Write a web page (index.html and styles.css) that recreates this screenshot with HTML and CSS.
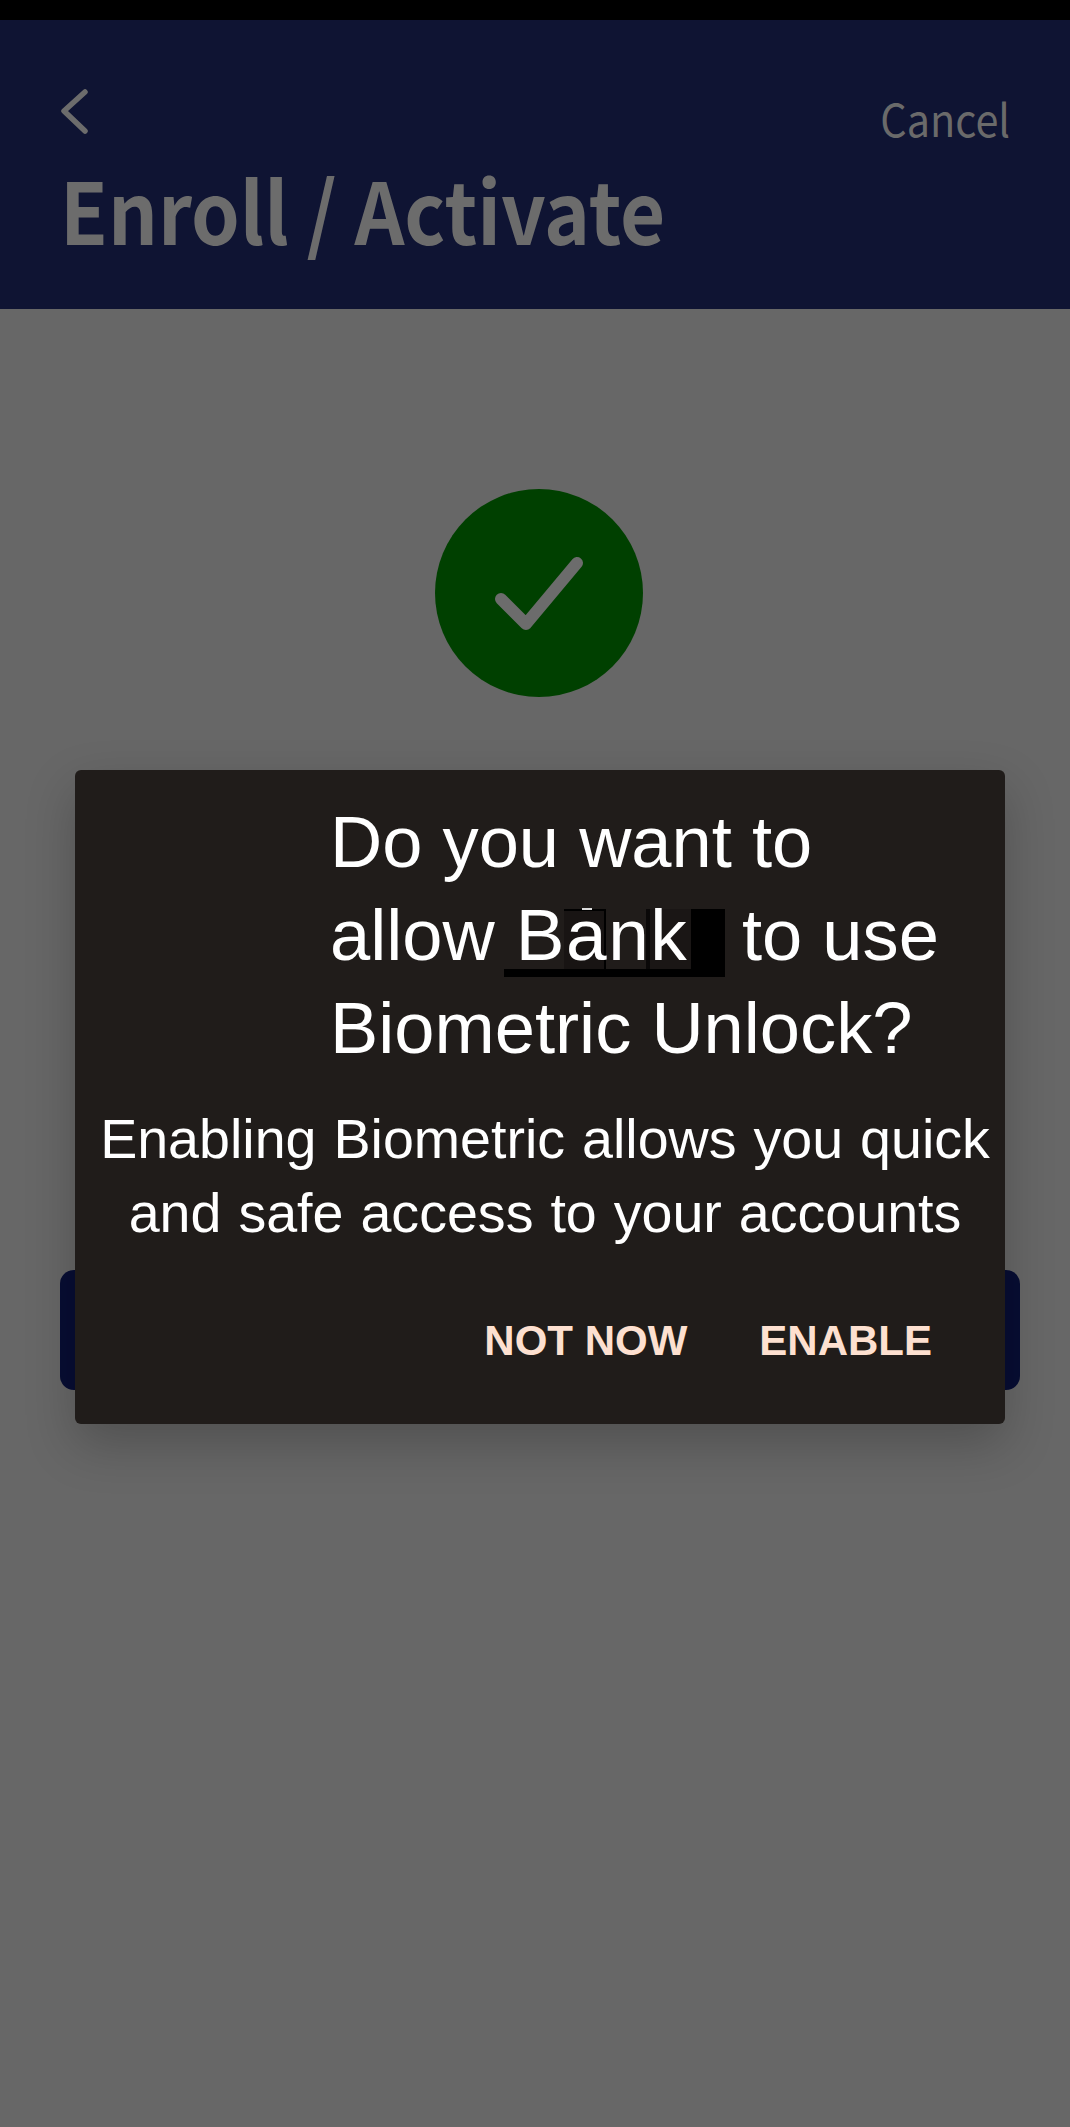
FILE: index.html
```html
<!DOCTYPE html>
<html lang="en">
<head>
<meta charset="utf-8">
<title>Enroll / Activate</title>
<link rel="stylesheet" href="styles.css">
</head>
<body>
<div class="page">
  <div class="status-bar"></div>
  <header class="app-header">
    <div class="top-row">
      <svg class="back-icon" viewBox="0 0 30 46" width="30" height="46" aria-hidden="true"><path d="M25 4 L4 23 L25 43"/></svg>
      <span class="cancel">Cancel</span>
    </div>
    <h1 class="page-title">Enroll / Activate</h1>
  </header>
  <main class="content">
    <div class="success-badge">
      <svg class="check-icon" viewBox="0 0 208 208" width="208" height="208" aria-hidden="true"><path d="M66 110 L91 135 L142 74"/></svg>
    </div>
    <div class="primary-button"></div>
  </main>
  <section class="dialog">
    <h2 class="dialog-title">Do you want to<br>allow <span class="app-name"><span class="mask-strip"></span><span class="mask-block"></span><span class="mask-a"></span><span class="mask-k"></span><span class="mask-dash"></span><span class="app-name-text">Bank</span></span> to use<br>Biometric Unlock?</h2>
    <p class="dialog-body">Enabling Biometric allows you quick<br>and safe access to your accounts</p>
    <div class="dialog-actions">
      <span class="dialog-action">NOT NOW</span>
      <span class="dialog-action">ENABLE</span>
    </div>
  </section>
</div>
</body>
</html>
```
FILE: styles.css
```css
* { box-sizing: border-box; }
html, body { margin: 0; padding: 0; }
body { background: #676767; font-family: "Liberation Sans", Arial, sans-serif; }
.page { position: relative; width: 1070px; height: 2127px; overflow: hidden; background: #676767; }
.status-bar { height: 20px; background: #000; }
.app-header { height: 289px; background: #0f1433; padding: 66px 60px 0 60px; color: #6c6c6c; font-family: "Noto Sans CJK SC", "Noto Sans", sans-serif; }
.top-row { display: flex; justify-content: space-between; align-items: flex-start; height: 67px; }
.back-icon { display: block; margin-top: 2px; }
.back-icon path { fill: none; stroke: #6c6c6c; stroke-width: 5.5; stroke-linecap: round; stroke-linejoin: round; }
.cancel { font-size: 45px; line-height: 64px; margin-top: 0; color: #6a6a6a; transform: scaleX(0.92); transform-origin: right center; }
.page-title { margin: 0; font-size: 85px; line-height: 110px; font-weight: 700; color: #6c6c6c; transform: scaleX(0.917); transform-origin: left center; }
.content { display: flex; flex-direction: column; align-items: center; padding: 180px 0 0 10px; }
.success-badge { width: 208px; height: 208px; margin-right: 2px; border-radius: 50%; background: #004000; }
.check-icon { display: block; }
.check-icon path { fill: none; stroke: #6c6c6c; stroke-width: 12; stroke-linecap: round; stroke-linejoin: round; }
.primary-button { width: 960px; height: 120px; margin-top: 573px; border-radius: 14px; background: #070d33; }
.dialog { position: absolute; left: 75px; top: 770px; width: 930px; height: 654px; padding-top: 26px; background: #201c1a; border-radius: 6px; box-shadow: 0 20px 50px rgba(0, 0, 0, 0.22); color: #fff; }
.dialog-title { margin: 0; padding-left: 255px; font-size: 72.3px; line-height: 93px; font-weight: 400; }
.app-name { position: relative; display: inline-block; width: 207px; height: 68px; vertical-align: -17px; }
.app-name-text { position: absolute; left: 1px; bottom: 2px; line-height: 80px; font-size: 73px; letter-spacing: 1.5px; }
.mask-strip { position: absolute; left: -11px; right: -3px; top: 60px; height: 8px; background: #000; }
.mask-block { position: absolute; left: 176px; right: -3px; top: 0; height: 68px; background: #000; }
.mask-a { position: absolute; left: 49px; top: 0; width: 42px; height: 60px; background: #181413; border-top: 2px solid #000; border-right: 2px solid #000; }
.mask-k { position: absolute; left: 131px; top: 0; width: 45px; height: 60px; background: #1a1615; border-left: 4px solid #0a0808; }
.mask-dash { position: absolute; left: 67px; top: -1px; width: 10px; height: 2px; background: #ddd; }
.dialog-body { margin: 27px 0 0; padding-left: 10px; font-size: 55.6px; word-spacing: 1.5px; line-height: 74px; text-align: center; }
.dialog-actions { display: flex; justify-content: flex-end; gap: 72px; padding-right: 73px; margin-top: 67px; }
.dialog-action { font-size: 42px; line-height: 48px; font-weight: 700; color: #fde0d0; }
```
